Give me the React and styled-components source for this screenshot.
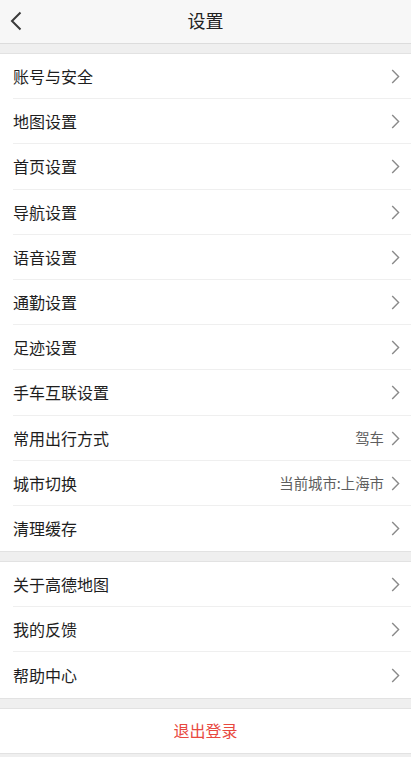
import React from "react";
import styled, { createGlobalStyle } from "styled-components";

const Global = createGlobalStyle`
  html, body { margin: 0; padding: 0; background: #efefef; }
  body { font-family: "Noto Sans CJK SC", "Noto Sans", sans-serif; -webkit-font-smoothing: antialiased; }
  * { box-sizing: border-box; }
`;

const Page = styled.div`
  width: 411px;
  min-height: 757px;
  background: #efefef;
  display: flex;
  flex-direction: column;
`;

const Header = styled.div`
  height: 44px;
  background: #f7f7f7;
  border-bottom: 1px solid #dcdcdc;
  display: flex;
  align-items: center;
  justify-content: center;
  position: relative;
`;

const BackBtn = styled.div`
  position: absolute;
  left: 10px;
  top: 9px;
  width: 16px;
  height: 24px;
  display: flex;
  align-items: center;
`;

const Title = styled.div`
  font-size: 18px;
  color: #222;
  line-height: 44px;
  margin-top: -3px;
`;

const Section = styled.div`
  background: #fff;
  margin-top: ${(p) => p.$gap}px;
  border-top: 1px solid #e2e2e2;
  border-bottom: 1px solid #e2e2e2;
  display: flex;
  flex-direction: column;
`;

const Row = styled.div`
  height: 45.2px;
  display: flex;
  align-items: center;
  padding-left: 13px;
  position: relative;
  &:not(:last-child)::after {
    content: "";
    position: absolute;
    left: 13px;
    right: 0;
    bottom: 0;
    height: 1px;
    background: #efefef;
  }
`;

const Label = styled.div`
  flex: 1;
  font-size: 16px;
  color: #1e1e1e;
  margin-top: -1px;
`;

const Value = styled.div`
  font-size: 14.4px;
  color: #5e5e5e;
  margin-right: 7px;
  margin-top: -1px;
`;

const Chevron = styled.svg`
  width: 9px;
  height: 15px;
  margin-right: 11px;
  flex: none;
`;

const Logout = styled.div`
  height: 45px;
  display: flex;
  align-items: center;
  justify-content: center;
  font-size: 16px;
  color: #e8493f;
  margin-top: -1px;
`;

const Arrow = () => (
  <Chevron viewBox="0 0 9 15">
    <path d="M1.2 1 L7.6 7.5 L1.2 14" fill="none" stroke="#8a8a8a" strokeWidth="1.4" />
  </Chevron>
);

const ItemRow = ({ label, value }) => (
  <Row>
    <Label>{label}</Label>
    {value && <Value>{value}</Value>}
    <Arrow />
  </Row>
);

const group1 = [
  ["账号与安全"],
  ["地图设置"],
  ["首页设置"],
  ["导航设置"],
  ["语音设置"],
  ["通勤设置"],
  ["足迹设置"],
  ["手车互联设置"],
  ["常用出行方式", "驾车"],
  ["城市切换", "当前城市:上海市"],
  ["清理缓存"],
];

const group2 = [["关于高德地图"], ["我的反馈"], ["帮助中心"]];

export default function App() {
  return (
    <Page>
      <Global />
      <Header>
        <BackBtn>
          <svg width="12" height="20" viewBox="0 0 12 20">
            <path d="M10.5 1.5 L2 10 L10.5 18.5" fill="none" stroke="#3a3a3a" strokeWidth="2" />
          </svg>
        </BackBtn>
        <Title>设置</Title>
      </Header>
      <Section $gap={9}>
        {group1.map(([l, v]) => (
          <ItemRow key={l} label={l} value={v} />
        ))}
      </Section>
      <Section $gap={9}>
        {group2.map(([l, v]) => (
          <ItemRow key={l} label={l} value={v} />
        ))}
      </Section>
      <Section $gap={9}>
        <Logout>退出登录</Logout>
      </Section>
    </Page>
  );
}
